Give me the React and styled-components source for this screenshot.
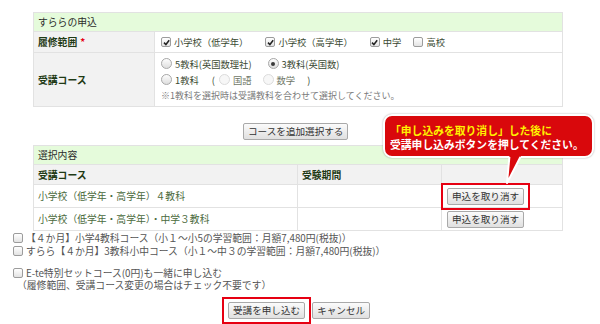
import styled, { createGlobalStyle } from "styled-components";

const GlobalStyle = createGlobalStyle`
  body {
    margin: 0;
    background: #fff;
    font-family: "Noto Sans CJK JP", "Noto Sans", sans-serif;
  }
`;

const Page = styled.div`
  position: relative;
  width: 600px;
  height: 324px;
  padding-top: 12px;
  box-sizing: border-box;
  overflow: hidden;
`;

const Table = styled.table`
  margin-left: 33px;
  width: 530px;
  border-collapse: collapse;
  table-layout: fixed;
  font-size: 9.3px;
  color: #3b4a33;
`;

const HeadCell = styled.td`
  height: 18px;
  padding: 0 4px;
  background: #e5fbdb;
  border: 1px solid #e2e2e2;
  font-size: 9.8px;
  color: #2b2b2b;
`;

const LabelCell = styled.td`
  height: ${(p) => p.$h || 20}px;
  padding: 0 4px;
  background: #f2f2f2;
  border: 1px solid #e2e2e2;
  font-size: 9.8px;
  font-weight: 700;
  color: #1f3a15;
`;

const Cell = styled.td`
  height: ${(p) => p.$h || 20}px;
  padding: ${(p) => p.$pad || "0 4px"};
  border: 1px solid #e2e2e2;
  color: ${(p) => p.$color || "#3b4a33"};
  font-size: ${(p) => p.$size || 9.3}px;
  vertical-align: middle;
`;

const Required = styled.span`
  color: #e60012;
  margin-left: 3px;
`;

const Line = styled.div`
  display: flex;
  align-items: center;
  height: 16px;
`;

const Option = styled.label`
  display: inline-flex;
  align-items: center;
  margin-right: ${(p) => p.$mr ?? 17}px;
  color: ${(p) => (p.$dim ? "#6f7868" : "inherit")};
  white-space: nowrap;
`;

const Box = styled.span`
  display: inline-flex;
  align-items: center;
  justify-content: center;
  width: 8px;
  height: 8px;
  margin-right: 3px;
  border: 1px solid #9c9c9c;
  border-radius: 2px;
  background: linear-gradient(#ffffff, #e3e3e3);
  flex: none;
`;

const Dot = styled.span`
  display: inline-flex;
  align-items: center;
  justify-content: center;
  width: 9px;
  height: 9px;
  margin-right: 3px;
  border: 1px solid ${(p) => (p.$disabled ? "#dcdcdc" : "#a9a9a9")};
  border-radius: 50%;
  background: ${(p) =>
    p.$disabled ? "#f7f7f7" : "linear-gradient(#fdfdfd, #dedede)"};
  flex: none;

  &::after {
    content: "";
    display: ${(p) => (p.$checked ? "block" : "none")};
    width: 4px;
    height: 4px;
    border-radius: 50%;
    background: #3a3a3a;
  }
`;

const Paren = styled.span`
  margin-right: ${(p) => p.$mr || 0}px;
`;

const Hint = styled.div`
  height: 16px;
  line-height: 16px;
  font-size: 9px;
  color: #7a7a7a;
`;

const Button = styled.button`
  font-family: inherit;
  font-size: 9.6px;
  color: #333;
  height: 17px;
  padding: 0 4px;
  line-height: 15px;
  border: 1px solid #a9a9a9;
  border-radius: 2px;
  background: linear-gradient(#fbfbfb, #e0e0e0);
  white-space: nowrap;
`;

// red marker frame drawn over a button
const Highlight = styled.span`
  position: relative;
  display: inline-flex;

  &::after {
    content: "";
    position: absolute;
    inset: -5px -6px -5px -6px;
    border: 2px solid #e60012;
    pointer-events: none;
  }
`;

const AddRow = styled.div`
  display: flex;
  padding-left: 243px;
  margin: 16px 0 4px;
  height: 18px;
`;

const Extras = styled.div`
  padding-left: 13px;
  font-size: 9.8px;
  color: #555;
`;

const ExtraLine = styled.div`
  display: flex;
  align-items: center;
  height: 13px;
  margin-top: ${(p) => p.$mt || 0}px;
  white-space: nowrap;
`;

const Note = styled.div`
  height: 13px;
  line-height: 13px;
  padding-left: 4px;
  white-space: nowrap;
`;

const Actions = styled.div`
  display: flex;
  gap: 7px;
  padding-left: 228px;
  margin-top: 10px;
`;

const Callout = styled.div`
  position: absolute;
  left: 383px;
  top: 114px;
  width: 198px;
  height: 33px;
  padding: 7px 4px 0 5px;
  border: 2px solid #fff;
  border-radius: 9px;
  background: #d9080c;
  box-shadow: 0 0 2px rgba(0, 0, 0, 0.35);
  font-size: 10.8px;
  font-weight: 700;
  line-height: 14px;
  white-space: nowrap;
`;

const CalloutLine = styled.div`
  color: ${(p) => p.$color};
`;

const Tail = styled.svg`
  position: absolute;
  left: 500px;
  top: 150px;
  overflow: visible;
`;

const Check = ({ checked }) => (
  <Box>
    {checked && (
      <svg width="7" height="7" viewBox="0 0 7 7">
        <path d="M1 3.6 L2.9 5.5 L6.2 1.2" fill="none" stroke="#222" strokeWidth="1.5" />
      </svg>
    )}
  </Box>
);

export default function App() {
  return (
    <Page>
      <GlobalStyle />
      <Table>
        <colgroup>
          <col style={{ width: 121 }} />
          <col />
        </colgroup>
        <tbody>
          <tr>
            <HeadCell colSpan={2}>すららの申込</HeadCell>
          </tr>
          <tr>
            <LabelCell>
              履修範囲<Required>*</Required>
            </LabelCell>
            <Cell $pad="0 6px">
              <Line>
                <Option>
                  <Check checked />
                  小学校（低学年）
                </Option>
                <Option>
                  <Check checked />
                  小学校（高学年）
                </Option>
                <Option $mr={12}>
                  <Check checked />
                  中学
                </Option>
                <Option>
                  <Check />
                  高校
                </Option>
              </Line>
            </Cell>
          </tr>
          <tr>
            <LabelCell $h={51}>受講コース</LabelCell>
            <Cell $h={51} $pad="1px 6px 1px">
              <Line>
                <Option $mr={16}>
                  <Dot />
                  5教科(英国数理社)
                </Option>
                <Option>
                  <Dot $checked />
                  3教科(英国数)
                </Option>
              </Line>
              <Line>
                <Option $mr={13}>
                  <Dot />
                  1教科
                </Option>
                <Paren $mr={4}>(</Paren>
                <Option $mr={11} $dim>
                  <Dot $disabled />
                  国語
                </Option>
                <Option $mr={12} $dim>
                  <Dot $disabled />
                  数学
                </Option>
                <Paren>)</Paren>
              </Line>
              <Hint>※1教科を選択時は受講教科を合わせて選択してください。</Hint>
            </Cell>
          </tr>
        </tbody>
      </Table>

      <AddRow>
        <Button>コースを追加選択する</Button>
      </AddRow>

      <Table>
        <colgroup>
          <col style={{ width: 264 }} />
          <col style={{ width: 144 }} />
          <col />
        </colgroup>
        <tbody>
          <tr>
            <HeadCell colSpan={3}>選択内容</HeadCell>
          </tr>
          <tr>
            <LabelCell $h={19}>受講コース</LabelCell>
            <LabelCell $h={19}>受験期間</LabelCell>
            <LabelCell $h={19} />
          </tr>
          <tr>
            <Cell $h={22} $size={9.8} $color="#4a6a3c">
              小学校（低学年・高学年）４教科
            </Cell>
            <Cell $h={22} />
            <Cell $h={22} $pad="0 5px">
              <Highlight>
                <Button>申込を取り消す</Button>
              </Highlight>
            </Cell>
          </tr>
          <tr>
            <Cell $h={22} $size={9.8} $color="#4a6a3c">
              小学校（低学年・高学年）・中学３教科
            </Cell>
            <Cell $h={22} />
            <Cell $h={22} $pad="0 5px">
              <Button>申込を取り消す</Button>
            </Cell>
          </tr>
        </tbody>
      </Table>

      <Extras>
        <ExtraLine>
          <Check />
          【４か月】小学4教科コース（小１～小5の学習範囲：月額7,480円(税抜)）
        </ExtraLine>
        <ExtraLine>
          <Check />
          すらら【４か月】3教科小中コース（小１～中３の学習範囲：月額7,480円(税抜)）
        </ExtraLine>
        <ExtraLine $mt={9}>
          <Check />
          E-te特別セットコース(0円)も一緒に申し込む
        </ExtraLine>
        <Note>（履修範囲、受講コース変更の場合はチェック不要です）</Note>
      </Extras>

      <Actions>
        <Highlight>
          <Button>受講を申し込む</Button>
        </Highlight>
        <Button>キャンセル</Button>
      </Actions>

      <Callout>
        <CalloutLine $color="#fff200">「申し込みを取り消し」した後に</CalloutLine>
        <CalloutLine $color="#ffffff">受講申し込みボタンを押してください。</CalloutLine>
      </Callout>
      <Tail width="30" height="36">
        <polygon points="10,0 24,0 7,33" fill="#d9080c" />
        <polyline points="9.4,7 7,33 20.4,7" fill="none" stroke="#fff" strokeWidth="2" strokeLinejoin="round" />
      </Tail>
    </Page>
  );
}
